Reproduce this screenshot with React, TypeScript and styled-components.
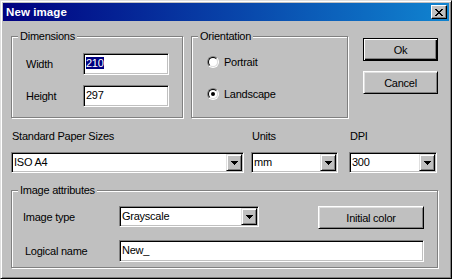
import React from "react";
import styled, { createGlobalStyle } from "styled-components";

const GlobalStyle = createGlobalStyle`
  html, body {
    margin: 0;
    padding: 0;
    background: #c0c0c0;
  }
  body {
    font-family: "Liberation Sans", Arial, sans-serif;
    font-size: 11px;
    letter-spacing: -0.25px;
    color: #000;
  }
`;

function CloseGlyph() {
  return (
    <svg width="8" height="7" viewBox="0 0 8 7" shapeRendering="crispEdges">
      <path
        fill="#000"
        d="M0 0h2v1H0z M6 0h2v1H6z M1 1h2v1H1z M5 1h2v1H5z M2 2h4v1H2z M3 3h2v1H3z M2 4h4v1H2z M1 5h2v1H1z M5 5h2v1H5z M0 6h2v1H0z M6 6h2v1H6z"
      />
    </svg>
  );
}

function ArrowGlyph() {
  return (
    <svg width="7" height="4" viewBox="0 0 7 4" shapeRendering="crispEdges">
      <path fill="#000" d="M0 0h7v1H0z M1 1h5v1H1z M2 2h3v1H2z M3 3h1v1H3z" />
    </svg>
  );
}

interface IComboProps {
  value: string;
  width: number;
}

function Combo(props: IComboProps) {
  return (
    <ComboBox $w={props.width}>
      <ComboValue>{props.value}</ComboValue>
      <DropButton>
        <ArrowGlyph />
      </DropButton>
    </ComboBox>
  );
}

function RadioOption(props: { label: string; checked?: boolean }) {
  return (
    <RadioRow>
      <RadioOuter>
        <RadioInner>{props.checked && <RadioDot />}</RadioInner>
      </RadioOuter>
      <span>{props.label}</span>
    </RadioRow>
  );
}

export default function App() {
  return (
    <>
      <GlobalStyle />
      <Window>
        <TitleBar>
          <Title>New image</Title>
          <CloseButton>
            <CloseGlyph />
          </CloseButton>
        </TitleBar>
        <Body>
          <TopRow>
            <Group $w={172} $h={88}>
              <Legend>Dimensions</Legend>
              <DimGrid>
                <Label>Width</Label>
                <Field $w={86}>
                  <Selected>210</Selected>
                </Field>
                <Label>Height</Label>
                <Field $w={86}>297</Field>
              </DimGrid>
            </Group>
            <Group $w={157} $h={88} $ml={8}>
              <Legend>Orientation</Legend>
              <RadioList>
                <RadioOption label="Portrait" />
                <RadioOption label="Landscape" checked />
              </RadioList>
            </Group>
            <ButtonColumn>
              <Button $default>Ok</Button>
              <Button>Cancel</Button>
            </ButtonColumn>
          </TopRow>

          <PaperRow>
            <Label $pl={1}>Standard Paper Sizes</Label>
            <Label $pl={1}>Units</Label>
            <Label $pl={1}>DPI</Label>
            <Combo value="ISO A4" width={233} />
            <Combo value="mm" width={87} />
            <Combo value="300" width={88} />
          </PaperRow>

          <Group $w={427} $h={84} $mt={11}>
            <Legend>Image attributes</Legend>
            <AttrGrid>
              <RowLabel $h={22}>Image type</RowLabel>
              <Combo value="Grayscale" width={140} />
              <span />
              <Button $w={106}>Initial color</Button>
              <RowLabel $h={22} $pl={2}>Logical name</RowLabel>
              <WideField $w={305}>New_</WideField>
            </AttrGrid>
          </Group>
        </Body>
      </Window>
    </>
  );
}

const Window = styled.div`
  box-sizing: border-box;
  width: 452px;
  height: 279px;
  padding: 2px;
  display: flex;
  flex-direction: column;
  background: #c0c0c0;
  border: 1px solid;
  border-color: #dfdfdf #000 #000 #dfdfdf;
  box-shadow: inset 1px 1px #fff, inset -1px -1px #808080;
`;

const TitleBar = styled.div`
  height: 18px;
  display: flex;
  align-items: center;
  justify-content: space-between;
  padding: 0 2px 0 3px;
  background: linear-gradient(to right, #000080, #1084d0);
`;

const Title = styled.span`
  color: #fff;
  font-weight: bold;
  font-size: 11.5px;
  letter-spacing: 0.1px;
`;

const CloseButton = styled.div`
  box-sizing: border-box;
  width: 16px;
  height: 14px;
  display: flex;
  align-items: center;
  justify-content: center;
  background: #c0c0c0;
  border: 1px solid;
  border-color: #fff #000 #000 #fff;
  box-shadow: inset -1px -1px #808080;
`;

const Body = styled.div`
  padding: 9px 0 0 8px;
  display: flex;
  flex-direction: column;
`;

const TopRow = styled.div`
  display: flex;
  align-items: flex-start;
`;

const Group = styled.fieldset<{ $w: number; $h: number; $ml?: number; $mt?: number }>`
  box-sizing: border-box;
  width: ${(p) => p.$w}px;
  height: ${(p) => p.$h}px;
  min-width: 0;
  margin: ${(p) => p.$mt || 0}px 0 0 ${(p) => p.$ml || 0}px;
  padding: 0;
  border: 1px solid #808080;
  box-shadow: inset 1px 1px #fff, 1px 1px #fff;
`;

const Legend = styled.legend`
  margin-left: 6px;
  padding: 0 2px;
  line-height: 13px;
  font-size: 11px;
  background: #c0c0c0;
`;

const DimGrid = styled.div`
  display: grid;
  grid-template-columns: 57px 86px;
  grid-auto-rows: 22px;
  row-gap: 10px;
  align-items: center;
  padding: 10px 0 0 14px;
`;

const Label = styled.span<{ $pl?: number }>`
  padding-left: ${(p) => p.$pl || 0}px;
  line-height: 13px;
  white-space: nowrap;
`;

const Field = styled.div<{ $w: number }>`
  box-sizing: border-box;
  width: ${(p) => p.$w}px;
  height: 22px;
  padding: 0 2px;
  line-height: 18px;
  background: #fff;
  border: 1px solid;
  border-color: #808080 #fff #fff #808080;
  box-shadow: inset 1px 1px #000, inset -1px -1px #c0c0c0;
  white-space: nowrap;
  overflow: hidden;
`;

const WideField = styled(Field)`
  grid-column: 2 / 5;
`;

const Selected = styled.span`
  background: #000080;
  color: #fff;
`;

const RadioList = styled.div`
  display: flex;
  flex-direction: column;
  gap: 12px;
  padding: 9px 0 0 15px;
`;

const RadioRow = styled.div`
  height: 20px;
  display: flex;
  align-items: center;
  gap: 5px;
`;

const RadioOuter = styled.span`
  box-sizing: border-box;
  width: 12px;
  height: 12px;
  border-radius: 50%;
  border: 1px solid;
  border-color: #808080 #fff #fff #808080;
  display: flex;
`;

const RadioInner = styled.span`
  box-sizing: border-box;
  width: 10px;
  height: 10px;
  border-radius: 50%;
  border: 1px solid;
  border-color: #000 #dfdfdf #dfdfdf #000;
  background: #fff;
  display: flex;
  align-items: center;
  justify-content: center;
`;

const RadioDot = styled.span`
  width: 4px;
  height: 4px;
  border-radius: 50%;
  background: #000;
`;

const ButtonColumn = styled.div`
  display: flex;
  flex-direction: column;
  gap: 10px;
  margin: 8px 0 0 15px;
`;

const Button = styled.div<{ $default?: boolean; $w?: number }>`
  box-sizing: border-box;
  width: ${(p) => p.$w || 75}px;
  height: 23px;
  display: flex;
  align-items: center;
  justify-content: center;
  background: #c0c0c0;
  border: 1px solid;
  border-color: ${(p) => (p.$default ? "#000" : "#fff #000 #000 #fff")};
  box-shadow: ${(p) =>
    p.$default
      ? "inset 1px 1px #fff, inset -1px -1px #000, inset -2px -2px #808080"
      : "inset 1px 1px #dfdfdf, inset -1px -1px #808080"};
`;

const PaperRow = styled.div`
  display: grid;
  grid-template-columns: 240px 98px 88px;
  grid-template-rows: 13px 21px;
  row-gap: 9px;
  margin-top: 12px;
`;

const ComboBox = styled.div<{ $w: number }>`
  box-sizing: border-box;
  width: ${(p) => p.$w}px;
  height: 21px;
  padding: 1px;
  display: flex;
  background: #fff;
  border: 1px solid;
  border-color: #808080 #fff #fff #808080;
  box-shadow: inset 1px 1px #000, inset -1px -1px #c0c0c0;
`;

const ComboValue = styled.span`
  flex: 1;
  padding-left: 1px;
  line-height: 17px;
  white-space: nowrap;
  overflow: hidden;
`;

const DropButton = styled.span`
  box-sizing: border-box;
  width: 16px;
  height: 17px;
  display: flex;
  align-items: center;
  justify-content: center;
  background: #c0c0c0;
  border: 1px solid;
  border-color: #dfdfdf #000 #000 #dfdfdf;
  box-shadow: inset 1px 1px #fff, inset -1px -1px #808080;
`;

const AttrGrid = styled.div`
  display: grid;
  grid-template-columns: 96px 140px 1fr 106px;
  row-gap: 11px;
  align-items: start;
  padding: 9px 13px 0 11px;
`;

const RowLabel = styled.span<{ $h: number; $pl?: number }>`
  height: ${(p) => p.$h}px;
  line-height: ${(p) => p.$h}px;
  padding-left: ${(p) => p.$pl || 0}px;
  white-space: nowrap;
`;
